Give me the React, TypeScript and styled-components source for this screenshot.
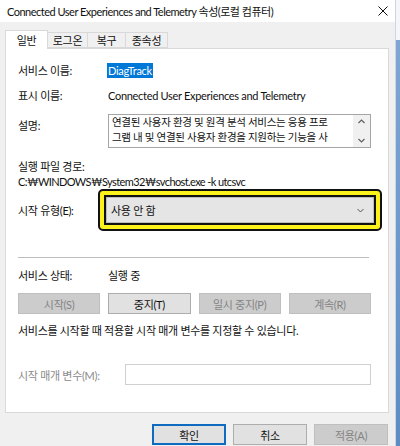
import React from 'react';
import styled, { createGlobalStyle } from 'styled-components';

const GlobalStyle = createGlobalStyle`
  html, body {
    margin: 0;
    padding: 0;
    background: #ffffff;
  }
  body {
    font-family: Lato, "Noto Sans CJK KR", sans-serif;
    font-size: 11px;
    letter-spacing: -0.3px;
    color: #111;
  }
`;

const Screen = styled.div`
  display: flex;
  width: 400px;
  height: 446px;
  overflow: hidden;
`;

const Window = styled.div`
  width: 396px;
  height: 446px;
  display: flex;
  flex-direction: column;
  background: #f0f0f0;
`;

const DesktopEdge = styled.div`
  width: 4px;
  background: linear-gradient(to bottom, #f4f6f9 0, #f4f6f9 40px, #7fa6d3 40px, #5c8cc4 100%);
  border-left: 1px solid #c9d6e6;
`;

const TitleBar = styled.div`
  height: 22px;
  flex-shrink: 0;
  background: #fff;
  display: flex;
  align-items: center;
  justify-content: space-between;
  padding: 0 6px 0 7px;
  font-size: 11px;
  letter-spacing: -0.5px;
`;

const CloseIcon = styled.svg`
  width: 10px;
  height: 10px;
  margin-right: 1px;
`;

const Body = styled.div`
  flex: 1;
  display: flex;
  flex-direction: column;
  padding: 8px 6px 0 5px;
`;

const TabStrip = styled.div`
  display: flex;
  align-items: flex-end;
  height: 18px;
  position: relative;
  z-index: 1;
`;

type TabProps = { $active?: boolean; $w: number };

const Tab = styled.div<TabProps>`
  width: ${(p: TabProps) => p.$w}px;
  box-sizing: border-box;
  height: ${(p: TabProps) => (p.$active ? '19px' : '16px')};
  margin-bottom: ${(p: TabProps) => (p.$active ? '-1px' : '0')};
  display: flex;
  align-items: center;
  justify-content: center;
  background: ${(p: TabProps) => (p.$active ? '#fff' : '#f0f0f0')};
  border: 1px solid #d9d9d9;
  border-bottom: ${(p: TabProps) => (p.$active ? 'none' : '1px solid #d9d9d9')};
  margin-left: -1px;
  font-size: 11px;

  &:first-child {
    margin-left: 0;
  }
`;

const Panel = styled.div`
  height: 365px;
  box-sizing: border-box;
  background: #fff;
  border: 1px solid #d9d9d9;
  padding: 0 17px 0 12px;
  display: flex;
  flex-direction: column;
`;

const Row = styled.div<{ $top: number; $h: number }>`
  display: flex;
  align-items: center;
  margin-top: ${(p: { $top: number }) => p.$top}px;
  height: ${(p: { $h: number }) => p.$h}px;
  flex-shrink: 0;
  white-space: nowrap;
`;

const Label = styled.div<{ $w?: number; $muted?: boolean }>`
  width: ${(p: { $w?: number }) => p.$w ?? 90}px;
  flex-shrink: 0;
  color: ${(p: { $muted?: boolean }) => (p.$muted ? '#8a8a8a' : '#111')};
`;

const Selected = styled.span`
  background: #0078d7;
  color: #fff;
  padding: 0 1px;
  line-height: 15px;
  margin-left: -1px;
`;

const DescBox = styled.div`
  flex: 1;
  height: 34px;
  box-sizing: border-box;
  border: 1px solid #a5a5a5;
  display: flex;
  align-self: flex-start;
`;

const DescText = styled.div`
  flex: 1;
  overflow: hidden;
  padding: 0 0 0 3px;
  font-size: 10.5px;
  line-height: 15px;
`;

const ScrollBar = styled.div`
  width: 17px;
  background: #f0f0f0;
  display: flex;
  flex-direction: column;
  align-items: center;
  justify-content: space-between;
  padding: 2px 0;
`;

const Arrow = styled.svg`
  width: 9px;
  height: 9px;
`;

const Stacked = styled.div`
  margin-top: 11px;
  line-height: 15px;
  flex-shrink: 0;
  white-space: nowrap;
`;

const PathText = styled.div`
  letter-spacing: -0.6px;
`;

const Highlight = styled.div`
  flex: 1;
  height: 42px;
  box-sizing: border-box;
  border: 2px solid #111;
  border-radius: 5px;
  background: #fbf21c;
  padding: 4px;
  margin-right: -11px;
  display: flex;
`;

const HighlightInner = styled.div`
  flex: 1;
  border: 2px solid #111;
  display: flex;
`;

const Dropdown = styled.div`
  flex: 1;
  background: #e5e5e5;
  border: 1px solid #bcbcbc;
  display: flex;
  align-items: center;
  justify-content: space-between;
  padding: 0 8px 0 4px;
`;

const Separator = styled.div`
  margin-top: 26px;
  height: 1px;
  background: #bdbdbd;
  margin-right: 2px;
  flex-shrink: 0;
`;

const ServiceButtons = styled.div`
  margin-top: 10px;
  display: grid;
  grid-template-columns: repeat(4, 1fr);
  column-gap: 8px;
  height: 21px;
  flex-shrink: 0;
`;

const Button = styled.div<{ $disabled?: boolean; $default?: boolean }>`
  box-sizing: border-box;
  display: flex;
  align-items: center;
  justify-content: center;
  background: ${(p: { $disabled?: boolean }) => (p.$disabled ? '#cccccc' : '#e1e1e1')};
  color: ${(p: { $disabled?: boolean }) => (p.$disabled ? '#848484' : '#111')};
  border: ${(p: { $disabled?: boolean; $default?: boolean }) =>
    p.$default ? '2px solid #0f6bbf' : p.$disabled ? '1px solid #bfbfbf' : '1px solid #adadad'};
  font-size: 11px;
`;

const HelpText = styled.div`
  margin-top: 9px;
  height: 16px;
  line-height: 16px;
  flex-shrink: 0;
  white-space: nowrap;
`;

const ParamInput = styled.div`
  flex: 1;
  height: 21px;
  box-sizing: border-box;
  border: 1px solid #d0d0d0;
  background: #fff;
`;

const DialogButtons = styled.div`
  display: flex;
  justify-content: flex-end;
  gap: 7px;
  margin-top: 11px;
  padding-right: 1px;
`;

const DialogButton = styled(Button)`
  width: 74px;
  height: 21px;
`;

const App: React.FC = () => {
  return (
    <Screen>
      <GlobalStyle />
      <Window>
        <TitleBar>
          <span>Connected User Experiences and Telemetry 속성(로컬 컴퓨터)</span>
          <CloseIcon viewBox="0 0 10 10">
            <path d="M0.5 0.5 L9.5 9.5 M9.5 0.5 L0.5 9.5" stroke="#111" strokeWidth="1" fill="none" />
          </CloseIcon>
        </TitleBar>
        <Body>
          <TabStrip>
            <Tab $active $w={43}>일반</Tab>
            <Tab $w={41}>로그온</Tab>
            <Tab $w={39}>복구</Tab>
            <Tab $w={43}>종속성</Tab>
          </TabStrip>
          <Panel>
            <Row $top={13} $h={16}>
              <Label>서비스 이름:</Label>
              <Selected>DiagTrack</Selected>
            </Row>
            <Row $top={9} $h={16}>
              <Label>표시 이름:</Label>
              <span>Connected User Experiences and Telemetry</span>
            </Row>
            <Row $top={11} $h={34}>
              <Label style={{ alignSelf: 'flex-start', marginTop: 3 }}>설명:</Label>
              <DescBox>
                <DescText>
                  <div>연결된 사용자 환경 및 원격 분석 서비스는 응용 프로</div>
                  <div>그램 내 및 연결된 사용자 환경을 지원하는 기능을 사</div>
                </DescText>
                <ScrollBar>
                  <Arrow viewBox="0 0 9 9">
                    <path d="M1.5 6 L4.5 3 L7.5 6" stroke="#606060" strokeWidth="1.2" fill="none" />
                  </Arrow>
                  <Arrow viewBox="0 0 9 9">
                    <path d="M1.5 3 L4.5 6 L7.5 3" stroke="#606060" strokeWidth="1.2" fill="none" />
                  </Arrow>
                </ScrollBar>
              </DescBox>
            </Row>
            <Stacked>
              <div>실행 파일 경로:</div>
              <PathText>C:₩WINDOWS₩System32₩svchost.exe -k utcsvc</PathText>
            </Stacked>
            <Row $top={0} $h={42}>
              <Label $w={80}>시작 유형(E):</Label>
              <Highlight>
                <HighlightInner>
                  <Dropdown>
                    <span>사용 안 함</span>
                    <Arrow viewBox="0 0 9 9">
                      <path d="M1.5 3 L4.5 6 L7.5 3" stroke="#555" strokeWidth="1" fill="none" />
                    </Arrow>
                  </Dropdown>
                </HighlightInner>
              </Highlight>
            </Row>
            <Separator />
            <Row $top={9} $h={16}>
              <Label>서비스 상태:</Label>
              <span>실행 중</span>
            </Row>
            <ServiceButtons>
              <Button $disabled>시작(S)</Button>
              <Button>중지(T)</Button>
              <Button $disabled>일시 중지(P)</Button>
              <Button $disabled>계속(R)</Button>
            </ServiceButtons>
            <HelpText>서비스를 시작할 때 적용할 시작 매개 변수를 지정할 수 있습니다.</HelpText>
            <Row $top={25} $h={21}>
              <Label $w={107} $muted>시작 매개 변수(M):</Label>
              <ParamInput />
            </Row>
          </Panel>
          <DialogButtons>
            <DialogButton $default>확인</DialogButton>
            <DialogButton>취소</DialogButton>
            <DialogButton $disabled>적용(A)</DialogButton>
          </DialogButtons>
        </Body>
      </Window>
      <DesktopEdge />
    </Screen>
  );
};

export default App;
